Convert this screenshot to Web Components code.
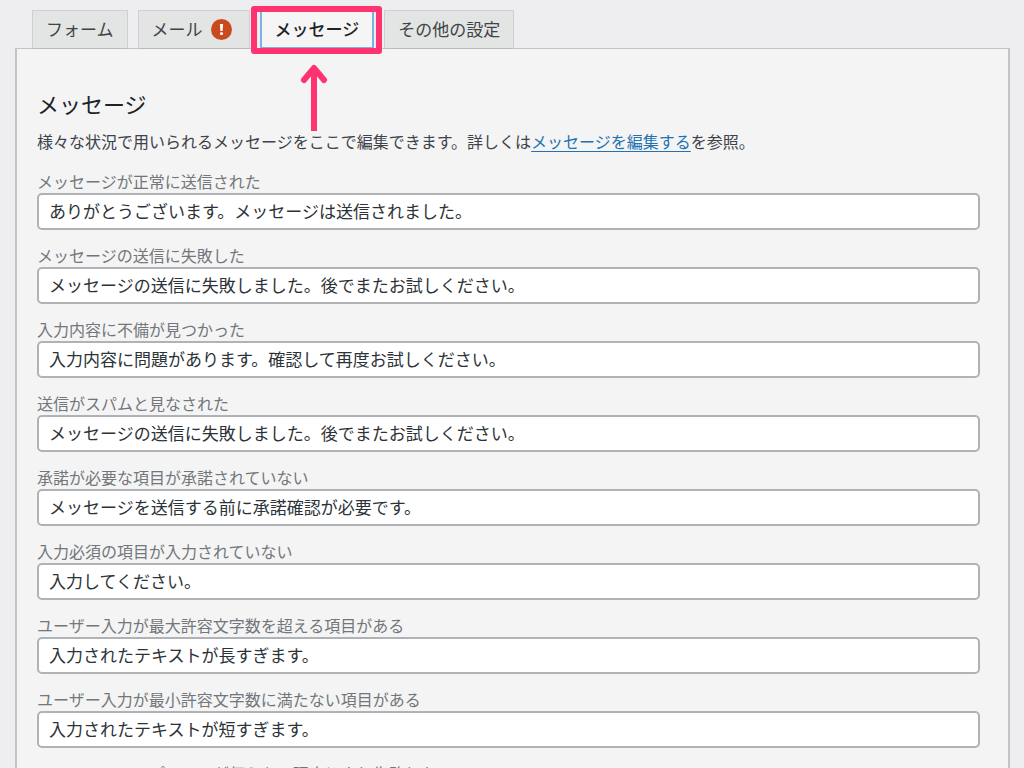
<!DOCTYPE html>
<html lang="ja">
<head>
<meta charset="utf-8">
<meta name="viewport" content="width=device-width, initial-scale=1">
<title>メッセージ</title>
<style>
html { background: #eeeef0; }
body { margin: 0; height: 100vh; overflow: hidden; font-family: "Noto Sans CJK JP", sans-serif; font-size: 16px; color: #3c434a; }
</style>
</head>
<body>
<settings-page></settings-page>
<script>
function define(name, html, setup) {
  customElements.define(name, class extends HTMLElement {
    connectedCallback() {
      if (this.shadowRoot) return;
      this.attachShadow({ mode: 'open' }).innerHTML = html;
      if (setup) setup(this, this.shadowRoot);
    }
  });
}

define('tab-item', `
<style>
:host { display: block; position: relative; }
button { box-sizing: border-box; height: 39px; display: flex; align-items: center; gap: 8px; margin: 0; padding: 0 13px 2px; border: 1px solid #cfd0d2; border-bottom-color: #b9babd; background: #e3e4e4; color: #3f4347; font: 17px/24px "Noto Sans CJK JP", sans-serif; white-space: nowrap; }
:host([alert]) button { padding-right: 17px; }
:host([current]) button { background: #f5f5f5; color: #1d2327; border: 2px solid #7fb1dc; font-weight: 500; }
::slotted(alert-badge) { margin-top: 2px; }
</style>
<button type="button" role="tab"><slot></slot></button>
<slot name="callout"></slot>`, (host, root) => {
  root.querySelector('button').setAttribute('aria-selected', host.hasAttribute('current'));
});

define('alert-badge', `
<style>:host { display: block; width: 21px; height: 21px; } svg { display: block; }</style>
<svg width="21" height="21" viewBox="0 0 21 21" role="img" aria-label="エラー">
<circle cx="10.5" cy="10.5" r="10.5" fill="#ca4a1f"/>
<path d="M8.9 5h3.2l-.5 7h-2.2z" fill="#fff"/><rect x="9" y="13.3" width="3" height="2.8" rx="1" fill="#fff"/>
</svg>`);

define('tab-callout', `
<style>
:host { position: absolute; inset: -4px -8px -5px -9px; border: 6px solid #ff3370; border-radius: 3px; z-index: 2; pointer-events: none; }
svg { position: absolute; top: 100%; left: 50%; margin: 16px 0 0 -16px; }
</style>
<svg width="28" height="68" viewBox="0 0 28 68" fill="none" stroke="#ff3370" stroke-width="6" aria-hidden="true">
<path d="M14 67V5"/><path d="M4 16L14 4L24 16" stroke-linecap="round" stroke-linejoin="round"/>
</svg>`);

define('message-field', `
<style>
:host { display: block; }
label { display: block; color: #72777c; font-size: 16px; line-height: 24px; white-space: nowrap; }
input { display: block; box-sizing: border-box; width: 100%; height: 37px; margin: 0; padding: 0 10px 2px; border: 2px solid #b0b2b6; border-radius: 5px; background: #fff; color: #2c3338; font: 17px/24px "Noto Sans CJK JP", sans-serif; }
</style>
<label for="text"></label><input id="text" type="text">`, (host, root) => {
  root.querySelector('label').textContent = host.getAttribute('label');
  root.querySelector('input').value = host.getAttribute('value');
});

define('message-panel', `
<style>
:host { display: block; border: 2px solid #c3c4c7; border-top-width: 1px; background: #f4f4f4; padding: 38px 28px 40px 20px; }
h2 { margin: 0 0 10px; font-size: 22px; line-height: 32px; font-weight: 400; color: #1d2327; }
p { margin: 0 0 16px; line-height: 24px; }
a { color: #2271b1; text-decoration: underline; text-underline-offset: 3px; text-decoration-thickness: 1px; }
.fields { display: grid; gap: 13px; }
</style>
<h2>メッセージ</h2>
<p>様々な状況で用いられるメッセージをここで編集できます。詳しくは<a href="#edit">メッセージを編集する</a>を参照。</p>
<div class="fields">
<message-field label="メッセージが正常に送信された" value="ありがとうございます。メッセージは送信されました。"></message-field>
<message-field label="メッセージの送信に失敗した" value="メッセージの送信に失敗しました。後でまたお試しください。"></message-field>
<message-field label="入力内容に不備が見つかった" value="入力内容に問題があります。確認して再度お試しください。"></message-field>
<message-field label="送信がスパムと見なされた" value="メッセージの送信に失敗しました。後でまたお試しください。"></message-field>
<message-field label="承諾が必要な項目が承諾されていない" value="メッセージを送信する前に承諾確認が必要です。"></message-field>
<message-field label="入力必須の項目が入力されていない" value="入力してください。"></message-field>
<message-field label="ユーザー入力が最大許容文字数を超える項目がある" value="入力されたテキストが長すぎます。"></message-field>
<message-field label="ユーザー入力が最小許容文字数に満たない項目がある" value="入力されたテキストが短すぎます。"></message-field>
<message-field label="ファイルのアップロードが何らかの理由により失敗した" value="ファイルのアップロード時に不明なエラーが発生しました。"></message-field>
</div>`);

define('settings-page', `
<style>
:host { display: block; padding: 10px 14px 0 15px; }
nav { display: flex; gap: 10px; padding-left: 17px; margin-bottom: -1px; }
</style>
<nav role="tablist" aria-label="設定">
<tab-item>フォーム</tab-item>
<tab-item alert>メール<alert-badge></alert-badge></tab-item>
<tab-item current>メッセージ<tab-callout slot="callout"></tab-callout></tab-item>
<tab-item>その他の設定</tab-item>
</nav>
<message-panel></message-panel>`);
</script>
</body>
</html>
